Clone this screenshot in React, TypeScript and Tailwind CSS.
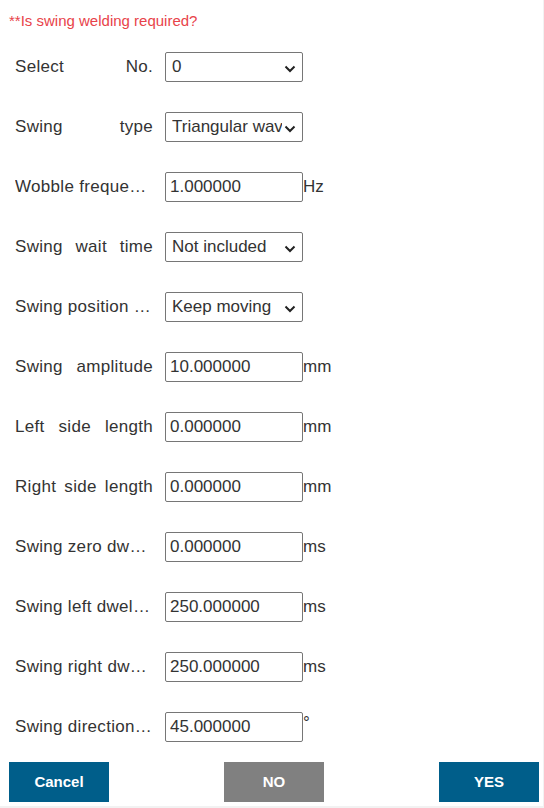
import * as React from 'react';

type Row = {
  label: string;
  kind: 'select' | 'input';
  value: string;
  unit?: string;
};

const rows: Row[] = [
  { label: 'Select No.', kind: 'select', value: '0' },
  { label: 'Swing type', kind: 'select', value: 'Triangular wave' },
  { label: 'Wobble frequency', kind: 'input', value: '1.000000', unit: 'Hz' },
  { label: 'Swing wait time', kind: 'select', value: 'Not included' },
  { label: 'Swing position when waiting', kind: 'select', value: 'Keep moving' },
  { label: 'Swing amplitude', kind: 'input', value: '10.000000', unit: 'mm' },
  { label: 'Left side length', kind: 'input', value: '0.000000', unit: 'mm' },
  { label: 'Right side length', kind: 'input', value: '0.000000', unit: 'mm' },
  { label: 'Swing zero dwell time', kind: 'input', value: '0.000000', unit: 'ms' },
  { label: 'Swing left dwell time', kind: 'input', value: '250.000000', unit: 'ms' },
  { label: 'Swing right dwell time', kind: 'input', value: '250.000000', unit: 'ms' },
  { label: 'Swing direction angle', kind: 'input', value: '45.000000', unit: '°' },
];

function Chevron() {
  return (
    <svg width="12" height="8" viewBox="0 0 12 8" className="absolute right-[6px] top-[12px] pointer-events-none">
      <path d="M1.5 1.5 L6 6 L10.5 1.5" fill="none" stroke="#222" strokeWidth="2" />
    </svg>
  );
}

function Field({ row }: { row: Row }) {
  return (
    <div className="flex items-center h-[30px]">
      {/* label, justified across its box */}
      <div className="w-[138px] ml-[15px] mr-[12px] whitespace-nowrap overflow-hidden text-ellipsis text-justify [text-align-last:justify] tracking-[0.3px]">
        {row.label}
      </div>

      {row.kind === 'select' ? (
        <div className="relative w-[138px] h-[30px] border border-[#767676] rounded-[2px] bg-white pl-[6px]">
          <div className="w-[110px] h-full leading-[28px] whitespace-nowrap overflow-hidden">
            {row.value}
          </div>
          <Chevron />
        </div>
      ) : (
        <input
          readOnly
          value={row.value}
          className="w-[138px] h-[30px] border border-[#767676] rounded-[2px] px-[4px] text-[17px] text-[#333] outline-none"
        />
      )}

      {row.unit && <span className={row.unit === '°' ? 'self-start leading-[22px]' : ''}>{row.unit}</span>}
    </div>
  );
}

export default function App() {
  return (
    <div className="h-[808px] bg-[#f2f2f2] font-['Liberation_Sans',Arial,sans-serif]">
      <div className="w-[543px] h-[806px] bg-white text-[17px] text-[#333]">
        <div className="pt-[12px] pl-[9px] h-[30px] text-[15px] leading-[17px] text-[#e8434a]">
          **Is swing welding required?
        </div>

        <div className="mt-[22px] flex flex-col gap-[30px]">
          {rows.map((r, i) => (
            <Field key={i} row={r} />
          ))}
        </div>

        <div className="mt-[20px] pl-[9px] pr-[4px] flex justify-between">
          <button className="w-[100px] h-[40px] bg-[#005e8a] text-white font-bold text-[15px]">Cancel</button>
          <button className="w-[100px] h-[40px] bg-[#808080] text-white font-bold text-[15px]">NO</button>
          <button className="w-[100px] h-[40px] bg-[#005e8a] text-white font-bold text-[15px]">YES</button>
        </div>
      </div>
    </div>
  );
}
